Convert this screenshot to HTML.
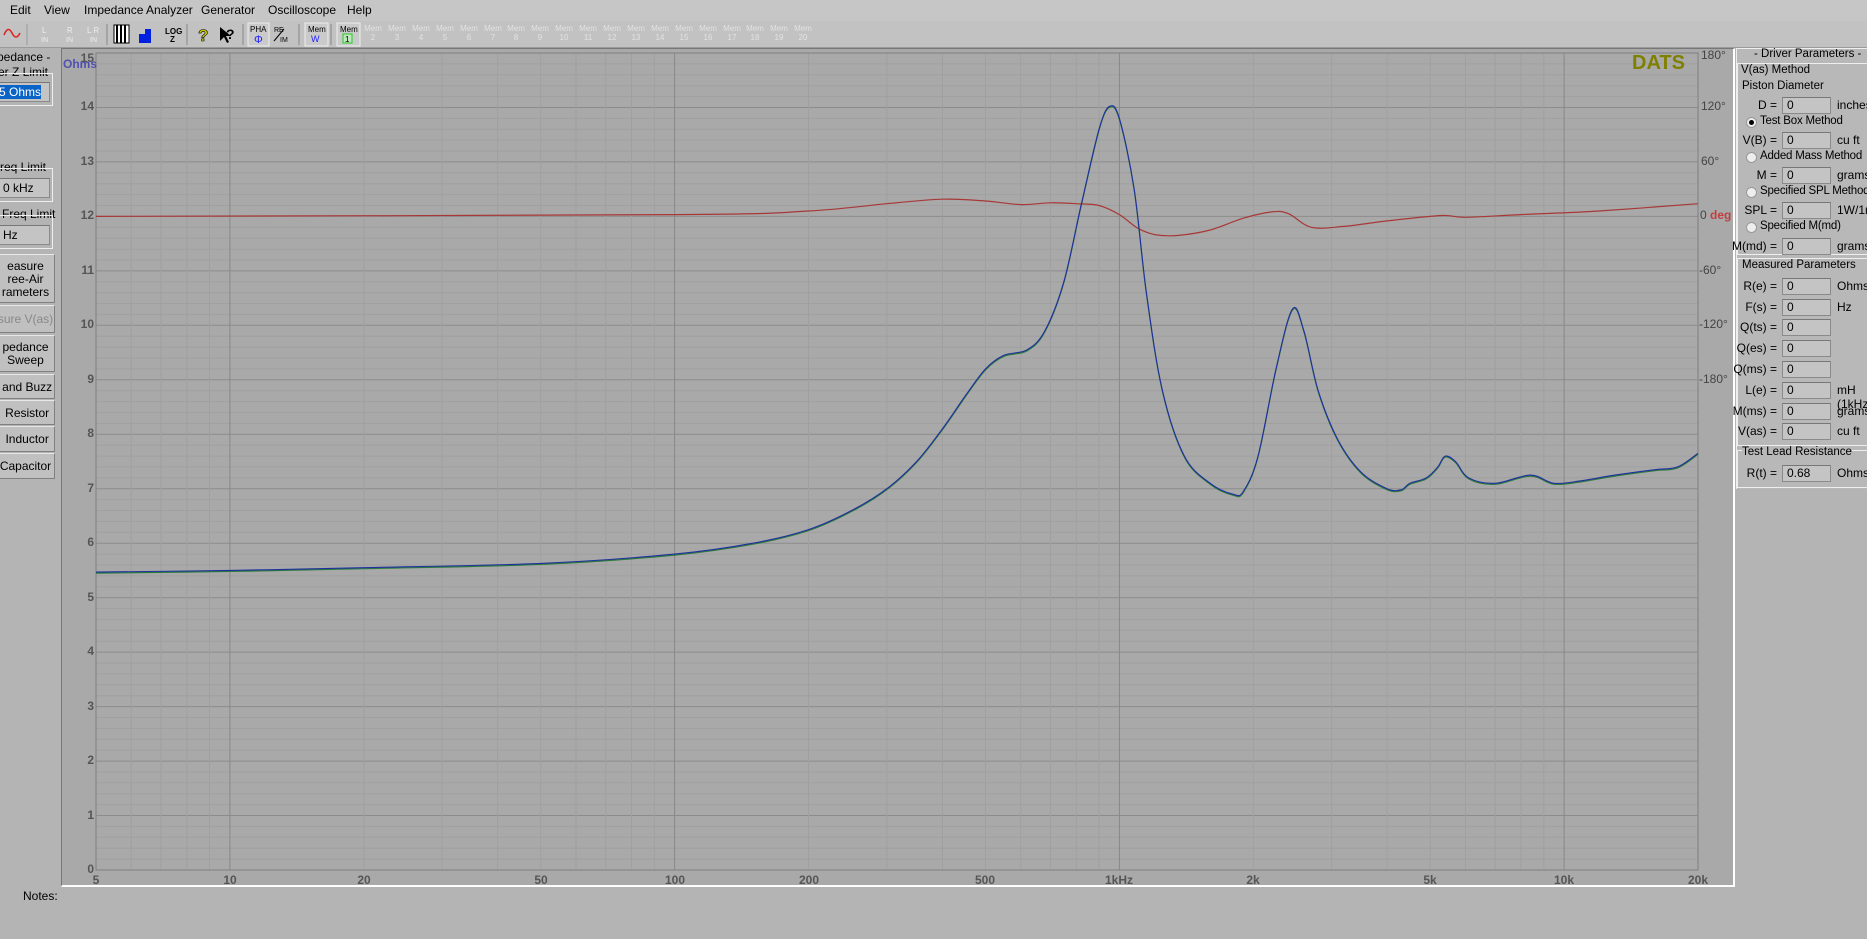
<!DOCTYPE html>
<html><head><meta charset="utf-8">
<style>
*{margin:0;padding:0;box-sizing:border-box}
body{width:1867px;height:939px;background:#b4b4b4;font-family:"Liberation Sans",Arial,sans-serif;font-size:12px;color:#000;position:relative;overflow:hidden}
.a{position:absolute;white-space:nowrap}
#menu{position:absolute;left:0;top:0;width:1867px;height:21px;background:#c6c6c6}
#tb{position:absolute;left:0;top:21px;width:1867px;height:27px;background:#c2c2c2;border-bottom:1px solid #9a9a9a}
.btn{position:absolute;left:-4px;width:59px;background:#c0c0c0;border:1px solid #e8e8e8;border-right-color:#808080;border-bottom-color:#808080;text-align:center;font-size:12px;line-height:13px}
.inp{position:absolute;background:#c4c4c4;border:1px solid #8a8a8a;border-top-color:#777;height:17px;font-size:12px;padding-left:4px;line-height:15px}
.lbl{position:absolute;text-align:right;width:60px;font-size:12px}
.unit{position:absolute;font-size:12px}
.yl{position:absolute;width:30px;text-align:right;font-weight:bold;color:#555;font-size:12px}
.xl{position:absolute;width:40px;text-align:center;font-weight:bold;color:#555;font-size:12px}
.pl{position:absolute;color:#444;font-size:12px}
.mem{position:absolute;top:3px;font-size:8px;color:#e2e2e2;line-height:9px;text-align:center;width:18px}
</style></head><body>
<div id="menu">
<span class="a" style="left:10px;top:3px">Edit</span>
<span class="a" style="left:44px;top:3px">View</span>
<span class="a" style="left:84px;top:3px">Impedance Analyzer</span>
<span class="a" style="left:201px;top:3px">Generator</span>
<span class="a" style="left:268px;top:3px">Oscilloscope</span>
<span class="a" style="left:347px;top:3px">Help</span>
</div>
<div id="tb">
<svg width="1867" height="27" style="position:absolute;left:0;top:0">
<path d="M4 14 Q8 4 12 12 T20 12" stroke="#d22" fill="none" stroke-width="1.5"/>
<line x1="27" y1="3" x2="27" y2="24" stroke="#999"/>
<text x="42" y="12" font-size="8" fill="#eee">L</text><text x="41" y="21" font-size="7" fill="#eee">IN</text>
<text x="67" y="12" font-size="8" fill="#eee">R</text><text x="66" y="21" font-size="7" fill="#eee">IN</text>
<text x="87" y="12" font-size="8" fill="#eee">L R</text><text x="90" y="21" font-size="7" fill="#eee">IN</text>
<line x1="107" y1="3" x2="107" y2="24" stroke="#888"/>
<rect x="114" y="4" width="15" height="18" fill="#fff" stroke="#000"/><rect x="116" y="4" width="2" height="18" fill="#000"/><rect x="120" y="4" width="2" height="18" fill="#000"/><rect x="124" y="4" width="2" height="18" fill="#000"/>
<path d="M139 22 V13 H145 V8 H151 V22 Z" fill="#0020e0"/>
<text x="165" y="13" font-size="8" font-weight="bold">LOG</text><text x="170" y="21" font-size="8" font-weight="bold">Z</text>
<line x1="187" y1="3" x2="187" y2="24" stroke="#888"/>
<text x="198" y="20" font-size="17" font-weight="bold" fill="#cc0" stroke="#000" stroke-width=".6">?</text>
<path d="M220 6 L220 20 L224 16 L227 22 L229 21 L226 15 L231 15 Z" fill="#000"/><text x="226" y="18" font-size="14" font-weight="bold">?</text>
<line x1="243" y1="3" x2="243" y2="24" stroke="#888"/>
<rect x="248" y="2" width="21" height="23" fill="#cacaca" stroke="#eee"/>
<text x="250" y="11" font-size="8">PHA</text><text x="254" y="22" font-size="11" fill="#22f">Φ</text>
<text x="274" y="11" font-size="7">RE</text><line x1="274" y1="20" x2="284" y2="8" stroke="#000"/><text x="280" y="21" font-size="7">IM</text>
<line x1="299" y1="3" x2="299" y2="24" stroke="#888"/>
<rect x="305" y="2" width="23" height="23" fill="#cacaca" stroke="#eee"/>
<text x="308" y="11" font-size="8">Mem</text><text x="311" y="21" font-size="9" fill="#22f">W</text>
<line x1="331" y1="3" x2="331" y2="24" stroke="#888"/>
<rect x="337" y="2" width="23" height="23" fill="#cacaca" stroke="#eee"/>
<text x="340" y="11" font-size="8">Mem</text><rect x="343" y="13" width="9" height="9" fill="#bfe8bf" stroke="#2c2"/><text x="345" y="21" font-size="8">1</text>
</svg>
<div id="mems"></div>
</div>

<span class="a" style="left:-3px;top:50px">pedance -</span>
<span class="a" style="left:-2px;top:65px">er Z Limit</span>
<div class="a" style="left:-2px;top:73px;width:55px;height:33px;border:1px solid #eee;border-left:none"></div>
<div class="inp" style="left:-2px;top:82px;width:52px;height:20px;padding:2px 0 0 0"><span style="background:#0a64c8;color:#fff">5 Ohms</span></div>
<span class="a" style="left:0;top:160px">req Limit</span>
<div class="a" style="left:-2px;top:168px;width:55px;height:34px;border:1px solid #eee;border-left:none"></div>
<div class="inp" style="left:-2px;top:178px;width:52px;height:20px;padding-top:2px">0 kHz</div>
<span class="a" style="left:2px;top:207px">Freq Limit</span>
<div class="a" style="left:-2px;top:215px;width:55px;height:34px;border:1px solid #eee;border-left:none"></div>
<div class="inp" style="left:-2px;top:225px;width:52px;height:20px;padding-top:2px">Hz</div>
<div class="btn" style="top:254px;height:49px;padding-top:5px">easure<br>ree-Air<br>rameters</div>
<div class="btn" style="top:305px;height:28px;padding-top:7px;color:#888">sure V(as)</div>
<div class="btn" style="top:335px;height:37px;padding-top:5px">pedance<br>Sweep</div>
<div class="btn" style="top:374px;height:25px;padding-top:6px">&nbsp;and Buzz</div>
<div class="btn" style="top:400px;height:25px;padding-top:6px">&nbsp;Resistor</div>
<div class="btn" style="top:426px;height:26px;padding-top:6px">&nbsp;Inductor</div>
<div class="btn" style="top:453px;height:26px;padding-top:6px">Capacitor</div>
<span class="a" style="left:23px;top:889px">Notes:</span>

<div class="a" style="left:61px;top:48px;width:1674px;height:839px;background:#a9a9a9;border-left:1px solid #777;border-top:1px solid #777;border-bottom:2px solid #fff;border-right:2px solid #fff"></div>
<svg id="plot" width="1867" height="939" style="position:absolute;left:0;top:0"></svg>
<span class="a" style="left:63px;top:57px;color:#5050b0;font-weight:bold;font-size:12px">Ohms</span>
<span class="a" style="left:1632px;top:52px;color:#808000;font-weight:bold;font-size:20px">DATS</span>
<div id="labels"></div>

<div class="a" style="left:1736px;top:48px;width:131px;height:441px;background:#b8b8b8;border-left:1px solid #eee;border-top:1px solid #eee"></div>
<span class="a" style="left:1754px;top:48px;font-size:11.5px">- Driver Parameters -</span>
<div class="a" style="left:1737px;top:63px;width:140px;height:192px;border:1px solid #eee;border-right:none"></div>
<span class="a" style="left:1741px;top:64px;background:#b8b8b8;font-size:11.5px">V(as) Method</span>
<span class="a" style="left:1742px;top:80px;font-size:11.5px">Piston Diameter</span>
<div class="a" style="left:1737px;top:258px;width:140px;height:188px;border:1px solid #eee;border-right:none"></div>
<span class="a" style="left:1742px;top:259px;background:#b8b8b8;font-size:11.5px">Measured Parameters</span>
<div class="a" style="left:1737px;top:450px;width:140px;height:38px;border:1px solid #eee;border-right:none"></div>
<span class="a" style="left:1742px;top:446px;background:#b8b8b8;font-size:11.5px">Test Lead Resistance</span>
<div id="rp"></div>

<script>
const svg=document.getElementById('plot');
const L=96,R=1698,T=53,B=870,oh=(B-T)/15;
const X=f=>L+(R-L)*Math.log10(f/5)/Math.log10(4000);
const Y=o=>B-o*oh;
let s='';
for(let i=0;i<=75;i++){const y=B-i*oh/5;const maj=i%5==0;s+=`<line x1="${L}" x2="${R}" y1="${y.toFixed(1)}" y2="${y.toFixed(1)}" stroke="${maj?'#8c8c8c':'#a0a0a0'}" stroke-width="1"/>`;}
for(let d=1;d<=10000;d*=10){for(let k=1;k<10;k++){const f=d*k;if(f<5||f>20000)continue;const x=X(f);const maj=(k==1);s+=`<line x1="${x.toFixed(1)}" x2="${x.toFixed(1)}" y1="${T}" y2="${B}" stroke="${maj?'#888':'#a0a0a0'}"/>`;}}
s+=`<rect x="${L}" y="${T}" width="${R-L}" height="${B-T}" fill="none" stroke="#808080"/>`;
const blueF=[[5,5.47],[10,5.5],[20,5.55],[50,5.63],[100,5.8],[150,6.0],[200,6.25],[250,6.6],[300,7.0],[350,7.5],[400,8.1],[450,8.7],[500,9.2],[550,9.45],[620,9.55],[680,9.9],[750,10.8],[820,12.2],[900,13.6],[950,14.02],[1000,13.8],[1080,12.5],[1150,10.6],[1250,8.8],[1400,7.6],[1600,7.1],[1800,6.9],[1900,6.95],[2050,7.6],[2250,9.2],[2450,10.3],[2600,9.9],[2800,8.8],[3100,7.9],[3500,7.3],[4000,7.0],[4300,6.98],[4500,7.1],[4900,7.2],[5200,7.4],[5400,7.6],[5700,7.5],[6100,7.2],[7000,7.1],[8400,7.25],[9500,7.1],[11000,7.15],[13000,7.25],[16000,7.35],[18000,7.4],[20000,7.65]];
const redF=[[5,0],[100,2],[200,6],[300,14],[400,19],[500,17],[600,13],[700,15],[800,14],[900,12],[1000,2],[1100,-13],[1200,-20],[1350,-21],[1600,-15],[1900,-2],[2200,5],[2400,3],[2700,-12],[3200,-11],[4000,-5],[5300,1],[6000,-1],[8000,2],[12000,6],[20000,14]];
const blue=blueF.map(([f,o])=>[X(f),Y(o)]);
const red=redF.map(([f,d])=>[X(f),Y(12)-d/60*oh]);
function path(p){let d='';for(let i=0;i<p.length;i++){const [x,y]=p[i];if(i==0){d+=`M${x.toFixed(1)} ${y.toFixed(1)}`;}else{const p0=p[Math.max(i-2,0)],p1=p[i-1],p2=p[i],p3=p[Math.min(i+1,p.length-1)];const c1x=p1[0]+(p2[0]-p0[0])/6,c1y=p1[1]+(p2[1]-p0[1])/6,c2x=p2[0]-(p3[0]-p1[0])/6,c2y=p2[1]-(p3[1]-p1[1])/6;d+=` C${c1x.toFixed(1)} ${c1y.toFixed(1)} ${c2x.toFixed(1)} ${c2y.toFixed(1)} ${x.toFixed(1)} ${y.toFixed(1)}`;}}return d;}
s+=`<path d="${path(red)}" fill="none" stroke="#a83838" stroke-width="1.2"/>`;
s+=`<path d="${path(blue)}" fill="none" stroke="#2a7a3a" stroke-width="1.2" transform="translate(0,1)"/>`;
s+=`<path d="${path(blue)}" fill="none" stroke="#2030a0" stroke-width="1.1"/>`;
svg.innerHTML=s;
let h='';
for(let i=0;i<=15;i++){const y=B-i*oh;h+=`<div class="yl" style="left:64px;top:${(i==15?y-2:y-8).toFixed(0)}px">${i}</div>`;}
const xs=[[5,'5'],[10,'10'],[20,'20'],[50,'50'],[100,'100'],[200,'200'],[500,'500'],[1000,'1kHz'],[2000,'2k'],[5000,'5k'],[10000,'10k'],[20000,'20k']];
xs.forEach(([f,t])=>{h+=`<div class="xl" style="left:${(X(f)-20).toFixed(0)}px;top:873px">${t}</div>`;});
const ph=[['180°',0],['120°',1],['60°',2],['-60°',4],['-120°',5],['-180°',6]];
ph.forEach(([t,k])=>{h+=`<div class="pl" style="left:${t[0]=='-'?1699:1701}px;top:${(k==0?T-5:T+k*oh-8).toFixed(0)}px">${t}</div>`;});
h+=`<div class="pl" style="left:1700px;top:${(T+3*oh-8).toFixed(0)}px">0 <b style="color:#c04040">deg</b></div>`;
document.getElementById('labels').innerHTML=h;
let m='';for(let i=2;i<=20;i++){const x=373+(i-2)*23.9;m+=`<div class="mem" style="left:${(x-9).toFixed(0)}px">Mem<br>${i}</div>`;}
document.getElementById('mems').innerHTML=m;
const rows=[[97,'D =','0','inches'],[132,'V(B) =','0','cu ft'],[167,'M =','0','grams'],[202,'SPL =','0','1W/1m'],[238,'M(md) =','0','grams'],[278,'R(e) =','0','Ohms'],[299,'F(s) =','0','Hz'],[319,'Q(ts) =','0',''],[340,'Q(es) =','0',''],[361,'Q(ms) =','0',''],[382,'L(e) =','0','mH (1kHz)'],[403,'M(ms) =','0','grams'],[423,'V(as) =','0','cu ft'],[465,'R(t) =','0.68','Ohms']];
let r='';
rows.forEach(([y,l,v,u])=>{r+=`<div class="lbl" style="left:1717px;top:${y+1}px">${l}</div><div class="inp" style="left:1782px;top:${y}px;width:49px">${v}</div><div class="unit" style="left:1837px;top:${y+1}px">${u}</div>`;});
const radios=[[115,'Test Box Method',1],[150,'Added Mass Method',0],[185,'Specified SPL Method',0],[220,'Specified M(md)',0]];
radios.forEach(([y,t,on])=>{r+=`<div class="a" style="left:1746px;top:${y+2}px;width:11px;height:11px;border-radius:50%;background:#eee;border:1px solid #999"></div>${on?`<div class="a" style="left:1749px;top:${y+5}px;width:5px;height:5px;border-radius:50%;background:#000"></div>`:''}<span class="a" style="left:1760px;top:${y}px;font-size:11.5px;letter-spacing:-0.2px">${t}</span>`;});
document.getElementById('rp').innerHTML=r;
</script>
</body></html>
